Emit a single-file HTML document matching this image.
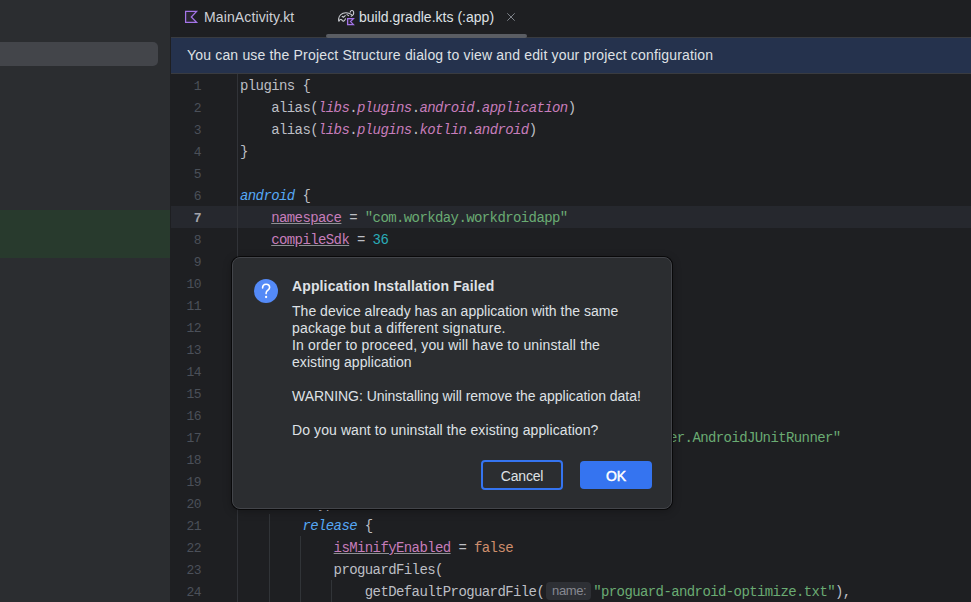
<!DOCTYPE html>
<html><head><meta charset="utf-8">
<style>
*{margin:0;padding:0;box-sizing:border-box}
html,body{width:971px;height:602px;overflow:hidden;background:#1E1F22;font-family:"Liberation Sans",sans-serif;position:relative}
.abs{position:absolute}
#left{left:0;top:0;width:170px;height:602px;background:#2B2D30}
#sel{left:0;top:42px;width:158px;height:24px;background:#43454A;border-radius:0 5px 5px 0}
#green{left:0;top:210px;width:170px;height:48px;background:#283A2D}
#sep{left:170px;top:0;width:1px;height:602px;background:#1E1F22}
#tabs{left:171px;top:0;width:800px;height:37px;background:#1E1F22}
.tab{position:absolute;top:0;height:37px;font-size:14px;color:#DFE1E5;line-height:35px;white-space:nowrap}
#ul{left:326px;top:34px;width:201px;height:4px;background:#5A5D63;border-radius:2px;z-index:2}
#banner{left:171px;top:37px;width:800px;height:37px;background:#25324D;border-top:1px solid #393B40;border-bottom:1px solid #393B40;font-size:14px;color:#DFE1E5;line-height:35px;padding-left:16px;white-space:nowrap;letter-spacing:0.175px}
#cur{left:171px;top:206px;width:800px;height:22px;background:#26282E}
#gsep{left:237px;top:74px;width:1px;height:528px;background:#313338}
.ln{position:absolute;left:167px;width:34px;text-align:right;font-family:"Liberation Mono",monospace;font-size:13px;letter-spacing:-0.5px;color:#4B5059;line-height:22px;height:22px}
.ln.cur{color:#A1A3AB;font-weight:bold}
.code{position:absolute;left:240px;font-family:"Liberation Mono",monospace;font-size:14px;letter-spacing:-0.6014px;color:#BCBEC4;line-height:22px;height:22px;white-space:pre}
.p{color:#C77DBB;font-style:italic}
.pu{color:#C77DBB;text-decoration:underline;text-decoration-color:#8F9095;text-underline-offset:1px}
.b{color:#56A8F5;font-style:italic}
.s{color:#6AAB73}
.n{color:#2AACB8}
.k{color:#CF8E6D}
.guide{position:absolute;width:1px;background:#313438}
.hint{display:inline-block;vertical-align:top;position:relative;top:1px;height:18px;width:45px;text-align:center;background:#2E3035;color:#868991;font-family:"Liberation Sans",sans-serif;font-size:13px;letter-spacing:0;border-radius:4px;line-height:18px;margin:0 2px 0 2px;text-indent:1px;letter-spacing:-0.35px}
#dlg{left:232px;top:257px;width:440px;height:252px;background:#2B2D30;border:1px solid #43454A;border-radius:8px;box-shadow:0 0 0 1px #09090A,0 2px 10px rgba(0,0,0,.3)}
#dlg .t{position:absolute;left:59px;top:20px;font-size:14px;font-weight:bold;color:#DFE1E5;white-space:nowrap;letter-spacing:0.13px}
#dlg .m{position:absolute;left:59px;font-size:14px;color:#DFE1E5;line-height:17px;height:17px;white-space:nowrap}
#q{left:22px;top:21px;width:24px;height:24px;border-radius:50%;background:#548AF7;color:#fff;font-size:16px;text-align:center;line-height:24px;font-weight:bold}
.btn{position:absolute;font-size:14px;text-align:center;white-space:nowrap}
#cancel{left:248px;top:202px;width:82px;height:30px;border:2px solid #3574F0;border-radius:4px;color:#DFE1E5;line-height:28px;letter-spacing:-0.2px}
#ok{left:347px;top:203px;width:72px;height:28px;background:#3574F0;border-radius:4px;color:#fff;line-height:30px;font-weight:normal;-webkit-text-stroke:0.45px #fff;letter-spacing:0px}
</style></head><body>
<div id="left" class="abs"></div>
<div id="sel" class="abs"></div>
<div id="green" class="abs"></div>
<div id="sep" class="abs"></div>
<div id="tabs" class="abs">
  <svg class="abs" width="24" height="24" viewBox="0 0 24 24" style="left:9px;top:6px"><path d="M5.6 5.4 H16.6 L11.3 11 L16.6 16.3 H5.6 Z" fill="#2A2631" stroke="#A474E8" stroke-width="1.25" stroke-linejoin="miter"/></svg>
  <div class="tab" style="left:33px;letter-spacing:0.13px;color:#CED0D6">MainActivity.kt</div>
  <svg class="abs" width="24" height="24" viewBox="0 0 24 24" style="left:163px;top:6px"><g fill="none" stroke="#CED0D6" stroke-width="1.1" stroke-linecap="round" stroke-linejoin="round"><path d="M4.8 15 C4.2 12 5.5 8.5 9 7.2 C12 6.2 15 6.8 17.5 8.6"/><path d="M16.2 6.2 C16.5 4.2 19 3.8 19.6 5.8 C20 7.5 19.2 9.2 17.2 10.2"/><path d="M5 15 C6 13.2 7.4 13 8.4 14.6 C9.2 15.6 10.6 15.2 11.4 12.8"/><path d="M8.2 10.4 L9.6 11.2 L11.2 9.6"/><path d="M13 8.6 L14.6 9.6"/></g><path d="M13.6 12.6 H19.4 L16.6 15.6 L19.4 18.6 H13.6 Z" fill="#2A2631" stroke="#A474E8" stroke-width="1.3"/></svg>
  <div class="tab" style="left:188px;letter-spacing:0.02px">build.gradle.kts (:app)</div>
  <svg class="abs" width="10" height="10" viewBox="0 0 10 10" style="left:335px;top:12px"><path d="M1.3 1.3 L8.7 8.7 M8.7 1.3 L1.3 8.7" stroke="#7F838A" stroke-width="1"/></svg>
</div>
<div id="ul" class="abs"></div>
<div id="banner" class="abs">You can use the Project Structure dialog to view and edit your project configuration</div>
<div id="cur" class="abs"></div>
<div id="gsep" class="abs"></div>
<div class="ln" style="top:76px">1</div>
<div class="code" style="top:75px">plugins {</div>
<div class="ln" style="top:98px">2</div>
<div class="code" style="top:97px">    alias(<i class="p">libs</i>.<i class="p">plugins</i>.<i class="p">android</i>.<i class="p">application</i>)</div>
<div class="ln" style="top:120px">3</div>
<div class="code" style="top:119px">    alias(<i class="p">libs</i>.<i class="p">plugins</i>.<i class="p">kotlin</i>.<i class="p">android</i>)</div>
<div class="ln" style="top:142px">4</div>
<div class="code" style="top:141px">}</div>
<div class="ln" style="top:164px">5</div>
<div class="ln" style="top:186px">6</div>
<div class="code" style="top:185px"><i class="b">android</i> {</div>
<div class="ln cur" style="top:208px">7</div>
<div class="code" style="top:207px">    <span class="pu">namespace</span> = <span class="s">"com.workday.workdroidapp"</span></div>
<div class="ln" style="top:230px">8</div>
<div class="code" style="top:229px">    <span class="pu">compileSdk</span> = <span class="n">36</span></div>
<div class="ln" style="top:252px">9</div>
<div class="ln" style="top:274px">10</div>
<div class="ln" style="top:296px">11</div>
<div class="ln" style="top:318px">12</div>
<div class="ln" style="top:340px">13</div>
<div class="ln" style="top:362px">14</div>
<div class="ln" style="top:384px">15</div>
<div class="ln" style="top:406px">16</div>
<div class="ln" style="top:428px">17</div>
<div class="code" style="top:427px">        testInstrumentationRunner = <span class="s">"androidx.test.runner.AndroidJUnitRunner"</span></div>
<div class="ln" style="top:450px">18</div>
<div class="ln" style="top:472px">19</div>
<div class="ln" style="top:494px">20</div>
<div class="code" style="top:493px">    buildTypes</div>
<div class="ln" style="top:516px">21</div>
<div class="code" style="top:515px">        <i class="b">release</i> {</div>
<div class="ln" style="top:538px">22</div>
<div class="code" style="top:537px">            <span class="pu">isMinifyEnabled</span> = <span class="k">false</span></div>
<div class="ln" style="top:560px">23</div>
<div class="code" style="top:559px">            proguardFiles(</div>
<div class="ln" style="top:582px">24</div>
<div class="code" style="top:581px">                getDefaultProguardFile(<span class="hint">name:</span><span class="s">"proguard-android-optimize.txt"</span>),</div>
<div class="guide" style="left:269px;top:514px;height:88px"></div>
<div class="guide" style="left:300px;top:536px;height:66px"></div>
<div class="guide" style="left:331px;top:580px;height:22px"></div>
<div id="dlg" class="abs">
  <svg class="abs" width="24" height="24" viewBox="0 0 24 24" style="left:21px;top:21px"><circle cx="12" cy="12" r="12" fill="#548AF7"/><path d="M8.6 9 C8.6 6.6 10.1 5.3 12.1 5.3 C14.1 5.3 15.6 6.6 15.6 8.6 C15.6 10.4 14.2 11 13.1 11.9 C12.3 12.6 12.1 13.1 12.1 14.6" fill="none" stroke="#fff" stroke-width="1.6" stroke-linecap="round"/><circle cx="12.1" cy="18" r="1.15" fill="#fff"/></svg>
  <div class="t">Application Installation Failed</div>
  <div class="m" style="top:45px;letter-spacing:0.02px">The device already has an application with the same</div>
  <div class="m" style="top:62px;letter-spacing:0.18px">package but a different signature.</div>
  <div class="m" style="top:79px;letter-spacing:0.15px">In order to proceed, you will have to uninstall the</div>
  <div class="m" style="top:96px;letter-spacing:0.07px">existing application</div>
  <div class="m" style="top:130px;letter-spacing:-0.03px">WARNING: Uninstalling will remove the application data!</div>
  <div class="m" style="top:164px;letter-spacing:0.09px">Do you want to uninstall the existing application?</div>
  <div id="cancel" class="btn">Cancel</div>
  <div id="ok" class="btn">OK</div>
</div>
</body></html>
